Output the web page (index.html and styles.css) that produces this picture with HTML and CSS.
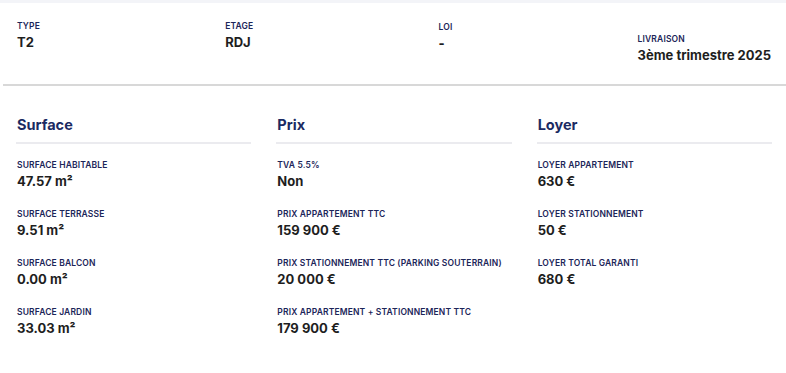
FILE: index.html
```html
<!DOCTYPE html>
<html lang="fr">
<head>
<meta charset="utf-8">
<title>Lot T2</title>
<link rel="stylesheet" href="styles.css">
</head>
<body>
<div class="strip"></div>
<div class="summary">
  <div class="item"><div class="label">Type</div><div class="value">T2</div></div>
  <div class="item"><div class="label">Etage</div><div class="value">RDJ</div></div>
  <div class="item item-loi"><div class="label">Loi</div><div class="value value-dash">-</div></div>
  <div class="item item-low"><div class="label">Livraison</div><div class="value">3ème trimestre 2025</div></div>
</div>
<div class="details">
  <section class="col">
    <h2 class="heading">Surface</h2>
    <div class="list">
      <div class="item"><div class="label">Surface habitable</div><div class="value">47.57 m²</div></div>
      <div class="item"><div class="label">Surface terrasse</div><div class="value">9.51 m²</div></div>
      <div class="item"><div class="label">Surface balcon</div><div class="value">0.00 m²</div></div>
      <div class="item"><div class="label">Surface jardin</div><div class="value">33.03 m²</div></div>
    </div>
  </section>
  <section class="col">
    <h2 class="heading">Prix</h2>
    <div class="list">
      <div class="item"><div class="label">TVA 5.5%</div><div class="value">Non</div></div>
      <div class="item"><div class="label">Prix appartement TTC</div><div class="value">159 900 €</div></div>
      <div class="item"><div class="label">Prix stationnement TTC (Parking souterrain)</div><div class="value">20 000 €</div></div>
      <div class="item"><div class="label">Prix appartement + stationnement TTC</div><div class="value">179 900 €</div></div>
    </div>
  </section>
  <section class="col">
    <h2 class="heading">Loyer</h2>
    <div class="list">
      <div class="item"><div class="label">Loyer appartement</div><div class="value">630 €</div></div>
      <div class="item"><div class="label">Loyer stationnement</div><div class="value">50 €</div></div>
      <div class="item"><div class="label">Loyer total garanti</div><div class="value">680 €</div></div>
    </div>
  </section>
</div>
</body>
</html>
```
FILE: styles.css
```css
* { box-sizing: border-box; }
html, body { margin: 0; padding: 0; background: #fff; }
body {
  font-family: Inter, Lato, sans-serif;
  color: #1e1e1e;
  width: 786px;
  height: 373px;
  overflow: hidden;
}
.strip { height: 3px; background: #f3f4f8; }
.summary {
  display: flex;
  justify-content: space-between;
  align-items: flex-start;
  height: 83px;
  padding: 17px 15px 0 14px;
  margin-left: 3px;
  border-bottom: 2px solid #d8d8d8;
}
.label {
  font-size: 8.5px;
  line-height: 12px;
  font-weight: 600;
  text-transform: uppercase;
  letter-spacing: 0.15px;
  color: #1c2559;
}
.value {
  font-size: 13px;
  line-height: 18px;
  font-weight: 700;
  color: #1e1e1e;
  margin-top: 1px;
}
.value-dash { font-weight: 800; }
.item-loi { margin-top: 1px; }
.item-low { margin-top: 13px; }
.details {
  display: grid;
  grid-template-columns: repeat(3, 1fr);
  column-gap: 25px;
  padding: 28px 14px 0 16px;
}
.heading {
  margin: 0;
  font-size: 14.5px;
  line-height: 20px;
  font-weight: 700;
  color: #1b2a62;
  padding: 1px 0 7px 1px;
  border-bottom: 2px solid #ebebef;
}
.list {
  display: flex;
  flex-direction: column;
  gap: 18px;
  padding: 15px 0 0 1px;
}
```
